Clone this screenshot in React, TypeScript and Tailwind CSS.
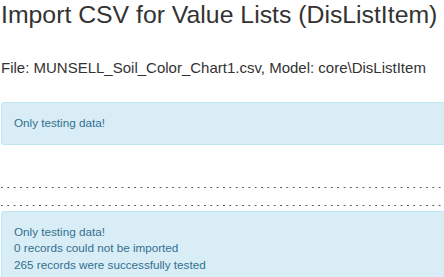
export default function App() {
  return (
    <div className="w-[444px] h-[277px] overflow-hidden bg-white font-['Liberation_Sans',Arial,sans-serif] text-[#333]">
      <div className="w-[480px] pl-[1px]">
        <h1 className="pt-[1px] text-[24.8px] leading-[28px] font-normal">
          Import CSV for Value Lists (DisListItem)
        </h1>
        <p className="mt-[30px] text-[15px] leading-[17px]">
          File: MUNSELL_Soil_Color_Chart1.csv, Model: core\DisListItem
        </p>
        <div className="mt-[26px] rounded-[3px] border border-[#bce8f1] bg-[#d9edf7] px-[12px] py-[12px] text-[11.7px] leading-[16.5px] text-[#31708f]">
          Only testing data!
        </div>
        <div className="mt-[42px] h-px bg-[linear-gradient(to_right,#555_2px,transparent_2px)] bg-[length:6.35px_1px] bg-repeat-x" />
        <div className="mt-[17px] h-px bg-[linear-gradient(to_right,#555_2px,transparent_2px)] bg-[length:6.35px_1px] bg-repeat-x" />
        <div className="mt-[5px] rounded-[3px] border border-[#bce8f1] bg-[#d9edf7] px-[12px] py-[12px] text-[11.7px] leading-[16.5px] text-[#31708f]">
          <div>Only testing data!</div>
          <div>0 records could not be imported</div>
          <div>265 records were successfully tested</div>
        </div>
      </div>
    </div>
  );
}
